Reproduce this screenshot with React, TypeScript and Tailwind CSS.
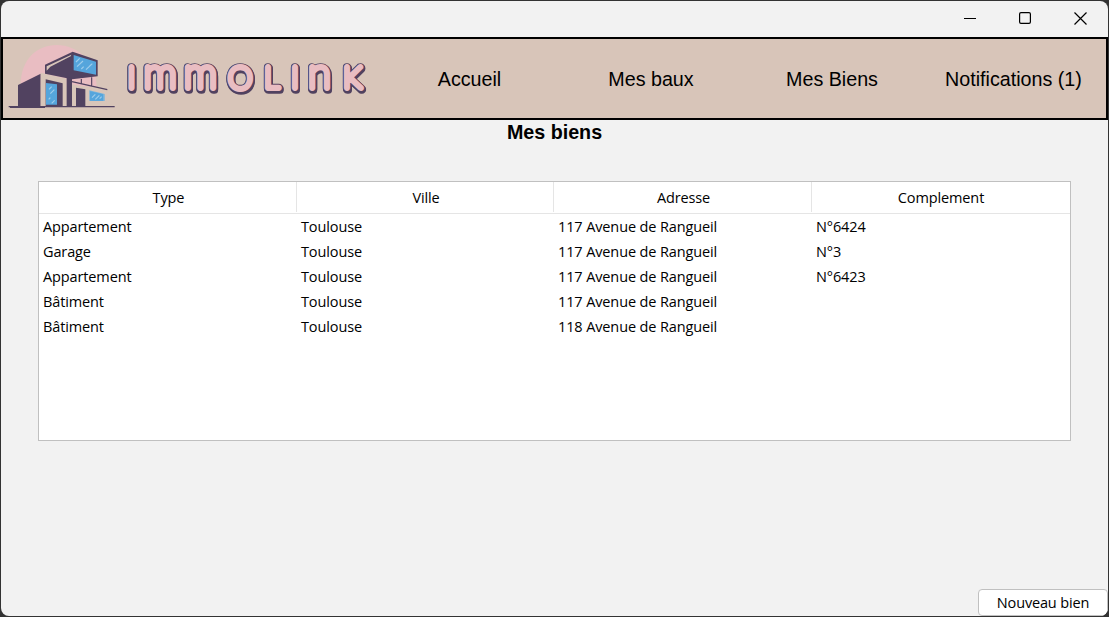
import React from "react";

const columns = ["Type", "Ville", "Adresse", "Complement"];

const rows = [
  ["Appartement", "Toulouse", "117 Avenue de Rangueil", "N°6424"],
  ["Garage", "Toulouse", "117 Avenue de Rangueil", "N°3"],
  ["Appartement", "Toulouse", "117 Avenue de Rangueil", "N°6423"],
  ["Bâtiment", "Toulouse", "117 Avenue de Rangueil", ""],
  ["Bâtiment", "Toulouse", "118 Avenue de Rangueil", ""],
];

function TitleBar() {
  return (
    <div className="flex h-9 shrink-0 justify-end pr-px pb-0.5">
      <button className="flex w-[55px] items-center justify-center" aria-label="Réduire">
        <svg width="12" height="12" viewBox="0 0 12 12" className="mt-px">
          <path d="M0 5.5H12" stroke="#000" />
        </svg>
      </button>
      <button className="flex w-[55px] items-center justify-center" aria-label="Agrandir">
        <svg width="12" height="12" viewBox="0 0 12 12" fill="none">
          <rect x="0.6" y="0.6" width="10.8" height="10.8" rx="1.4" stroke="#000" strokeWidth="1.2" />
        </svg>
      </button>
      <button className="flex w-[55px] items-center justify-center pl-px" aria-label="Fermer">
        <svg width="13" height="13" viewBox="0 0 13 13">
          <path d="M.5 .5L12.5 12.5M12.5 .5L.5 12.5" stroke="#000" strokeWidth="1.2" />
        </svg>
      </button>
    </div>
  );
}

function House() {
  return (
    <g transform="translate(0 36) scale(0.33333)">
      <path d="M62 150C62 70 110 27 170 27C235 27 290 80 290 152L230 150L62 150Z" fill="#e9bdc2" />
      <path d="M54 147L122 113V212H54Z" fill="#514260" />
      <path d="M122 110L200 128V210H122Z" fill="#d8c5b9" />
      <path d="M137 130L188 142V210H137Z" fill="#514260" />
      <path d="M138 141L171 145V206H138Z" fill="#55a5dc" />
      <path d="M135 86L218 47L293 73V121L216 130L135 113Z" fill="#514260" />
      <path d="M140 91L214 56L212 61L151 92L140 104Z" fill="#d8c5b9" />
      <path d="M221 57L288 77V116L221 103Z" fill="#55a5dc" />
      <path d="M200 125H216V212H200Z" fill="#514260" />
      <path d="M216 145L320 164V210H216Z" fill="#d8c5b9" />
      <path d="M216 137L322 161M244 129V145M275 124V151" stroke="#514260" strokeWidth="3.5" fill="none" />
      <path d="M228 155L256 160V210H228Z" fill="#514260" />
      <path d="M268 163L314 174V195H268Z" fill="#75b3dd" />
      <path d="M270 166L309 175V194H270Z" fill="#55a5dc" />
      <path d="M26 212H344" stroke="#514260" strokeWidth="4" />
      <path d="M30 213H135" stroke="#514260" strokeWidth="6" />
      <path
        d="M228 78L239 67M231 92L249 75M244 99L251 92M258 101L277 83M268 91L274 85M147 160L155 152M151 173L163 161M146 190L151 185M155 202L164 193M276 185L286 175M286 190L298 178M299 188L305 182"
        stroke="#9fcdeb"
        strokeWidth="3.5"
      />
    </g>
  );
}

const letters = [
  { char: "I", x: 131.3, y: 88.4, size: 30, lower: false },
  { char: "M", x: 160, y: 88.4, size: 42, lower: true },
  { char: "M", x: 200.3, y: 88.4, size: 42, lower: true },
  { char: "O", x: 240.2, y: 88.6, size: 31, lower: false },
  { char: "L", x: 271.8, y: 88.4, size: 30, lower: false },
  { char: "I", x: 295, y: 88.4, size: 30, lower: false },
  { char: "N", x: 319.4, y: 88.4, size: 42, lower: true },
  { char: "K", x: 352.4, y: 88.4, size: 30, lower: false },
];

function Wordmark() {
  return (
    <text
      textAnchor="middle"
      strokeLinejoin="round"
      className="font-[Lato,sans-serif] font-thin [filter:drop-shadow(1px_1px_0_#514260)_drop-shadow(0.5px_1px_0_#514260)]"
    >
      {letters.map((l, i) => (
        <tspan key={i} x={l.x} y={l.y} fontSize={l.size} fill="#514260" stroke="#514260" strokeWidth="7.7" className={l.lower ? "lowercase" : ""}>
          {l.char}
        </tspan>
      ))}
    </text>
  );
}

function WordmarkFace() {
  return (
    <text textAnchor="middle" strokeLinejoin="round" aria-hidden="true" className="font-[Lato,sans-serif] font-thin">
      {letters.map((l, i) => (
        <tspan key={i} x={l.x} y={l.y} fontSize={l.size} fill="#e9bdc2" stroke="#e9bdc2" strokeWidth="5.8" className={l.lower ? "lowercase" : ""}>
          {l.char}
        </tspan>
      ))}
    </text>
  );
}

function Logo() {
  return (
    <svg width="372" height="79" viewBox="3 39 372 79" className="shrink-0">
      <House />
      <Wordmark />
      <WordmarkFace />
    </svg>
  );
}

function NavBar() {
  return (
    <header className="flex h-[83px] shrink-0 border-2 border-black bg-[#d8c5b9]">
      <Logo />
      <nav className="ml-[3.5px] flex items-center pt-0.5 text-center text-[19.7px] text-black">
        <a className="w-[182px]">Accueil</a>
        <a className="w-[181px]">Mes baux</a>
        <a className="w-[181px]">Mes Biens</a>
        <a className="w-[182px]">Notifications (1)</a>
      </nav>
    </header>
  );
}

function PropertyTable() {
  return (
    <div className="ml-[37px] mt-[36px] h-[260px] w-[1033px] shrink-0 border border-[#c0c0c0] bg-white font-['Open_Sans',sans-serif] text-[14.5px] tracking-[-0.12px] text-black">
      <div className="grid h-8 grid-cols-[258px_257px_258px_258px] border-b border-[#e5e5e5]">
        {columns.map((c) => (
          <div key={c} className="mb-px flex items-center justify-center border-r border-[#e5e5e5] pt-0.5 pl-0.5 last:border-r-0 last:pl-0">
            {c}
          </div>
        ))}
      </div>
      {rows.map((r, i) => (
        <div key={i} className="grid h-[25px] grid-cols-[258px_257px_258px_258px] items-center">
          {r.map((cell, j) => (
            <div key={j} className="pl-1">
              {cell}
            </div>
          ))}
        </div>
      ))}
    </div>
  );
}

export default function App() {
  return (
    <div className="h-[617px] w-[1109px] overflow-hidden bg-[#333333] p-px font-['Liberation_Sans',Arial,sans-serif]">
      <div className="flex h-full flex-col overflow-hidden rounded-lg bg-[#f2f2f2]">
        <TitleBar />
        <NavBar />
        <h1 className="h-[25px] shrink-0 text-center text-[19.7px] leading-[25px] font-bold text-black">Mes biens</h1>
        <PropertyTable />
        <div className="mt-auto flex justify-end">
          <button className="flex h-[27px] w-[130px] items-center justify-center rounded border border-[#c0c0c0] bg-white font-['Open_Sans',sans-serif] text-[14.5px] tracking-[-0.15px] text-black">
            Nouveau bien
          </button>
        </div>
      </div>
    </div>
  );
}
